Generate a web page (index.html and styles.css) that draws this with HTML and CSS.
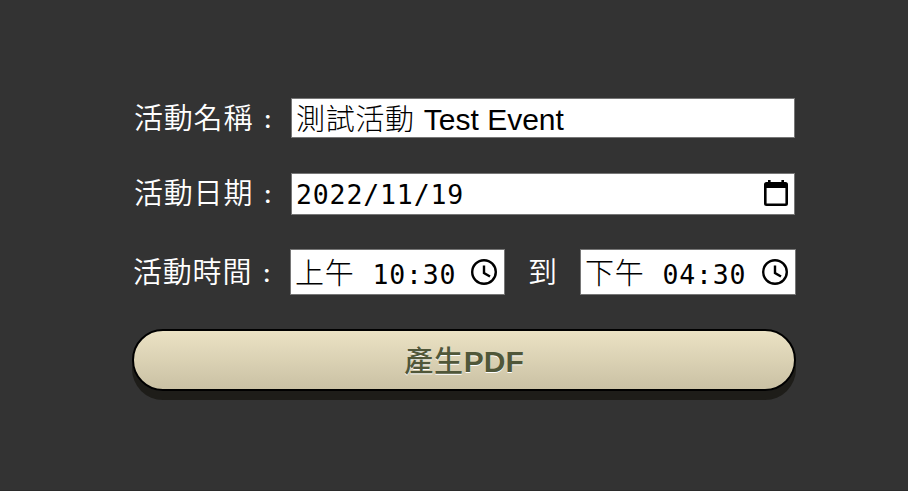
FILE: index.html
```html
<!DOCTYPE html>
<html lang="zh-Hant">
<head>
<meta charset="utf-8">
<title>產生PDF</title>
<link rel="stylesheet" href="styles.css">
</head>
<body>
<main class="form">
  <div class="row row-name">
    <span class="label">活動名稱<span class="colon">：</span></span>
    <div class="field"><span class="cjk">測試活動</span><span class="latin">Test Event</span></div>
  </div>
  <div class="row row-date">
    <span class="label">活動日期<span class="colon">：</span></span>
    <div class="field"><span class="mono">2022/11/19</span>
      <svg class="icon calendar" viewBox="0 0 24 26"><path fill-rule="evenodd" d="M4 0h2.6v2h10.8V0H20v2h1.500Q24 2 24 4.500V23.500Q24 26 21.500 26h-19Q0 26 0 23.500v-19Q0 2 2.500 2H4zM2.600 8v15.400h18.800V8z"/></svg>
    </div>
  </div>
  <div class="row row-time">
    <span class="label">活動時間<span class="colon">：</span></span>
    <div class="field"><span class="cjk">上午</span><span class="mono">10:30</span>
      <svg class="icon clock" viewBox="0 0 26 26"><circle cx="13" cy="13" r="11.8"/><path d="M13 6.500V14l6 3.500"/></svg>
    </div>
    <span class="to">到</span>
    <div class="field"><span class="cjk">下午</span><span class="mono">04:30</span>
      <svg class="icon clock" viewBox="0 0 26 26"><circle cx="13" cy="13" r="11.8"/><path d="M13 6.500V14l6 3.500"/></svg>
    </div>
  </div>
  <button class="submit"><span class="submit-cjk">產生</span>PDF</button>
</main>
</body>
</html>
```
FILE: styles.css
```css
* { box-sizing: border-box; }
body {
  margin: 0;
  height: 491px;
  background: #333;
  border-bottom: 1px solid #2b2b2b;
  font: 300 30px/40px "Liberation Sans", "Noto Sans CJK TC", sans-serif;
}
.form { width: 664px; margin-left: 132px; padding-top: 98px; }
.row { display: flex; width: 663px; white-space: nowrap; }
.row-name { height: 40px; margin-bottom: 35px; }
.row-date { height: 42px; margin-bottom: 34px; }
.row-time { width: 664px; height: 46px; margin-bottom: 34px; }
.label {
  width: 159px;
  padding: 1px 0 0 2px;
  color: #fff;
  font-size: 29px;
  font-weight: 350;
  letter-spacing: 0.8px;
}
.row-time .label { width: 158px; padding-left: 1px; line-height: 46px; }
.colon { margin-left: 5px; font-size: 19px; font-weight: 700; line-height: 1; }
.field {
  flex: 1;
  display: flex;
  align-items: center;
  padding: 0 6px 0 4px;
  border: 1px solid #767676;
  background: #fff;
  color: #000;
}
.row-time .field { flex: none; width: 215px; padding-right: 7px; }
.row-time .field:last-child { width: 216px; padding-right: 6px; }
.cjk { padding-top: 3px; font-size: 29px; letter-spacing: 0.7px; }
.latin { margin-left: 9px; padding-top: 4px; }
.mono {
  padding-top: 2px;
  font: 26.5px/40px "DejaVu Sans Mono", monospace;
  letter-spacing: 0.85px;
}
.row-time .mono { margin-left: 18px; padding-top: 5px; }
.icon { flex: none; margin-left: auto; }
.calendar { width: 24px; height: 26px; margin-bottom: 2px; }
.clock { width: 26px; height: 26px; margin-bottom: 1px; fill: none; stroke: #000; stroke-width: 2.4; }
.row-time .field:last-child .clock { margin-right: 1px; }
.to { width: 75px; padding-top: 1px; color: #fff; text-align: center; font-size: 29px; font-weight: 350; line-height: 46px; }
.submit {
  display: block;
  width: 664px;
  height: 62px;
  padding: 3px 0 0;
  border: 2px solid #000;
  border-radius: 31px;
  background: linear-gradient(#ebe2c4, #cac1a4);
  box-shadow: 0 9px 0 #1e1d19;
  color: #505739;
  font: bold 30px/55px "Liberation Sans", "Noto Sans CJK TC", sans-serif;
  text-shadow: 0 1px 0 #fff;
}
.submit-cjk { font-size: 29px; font-weight: 500; letter-spacing: 0.8px; }
```
